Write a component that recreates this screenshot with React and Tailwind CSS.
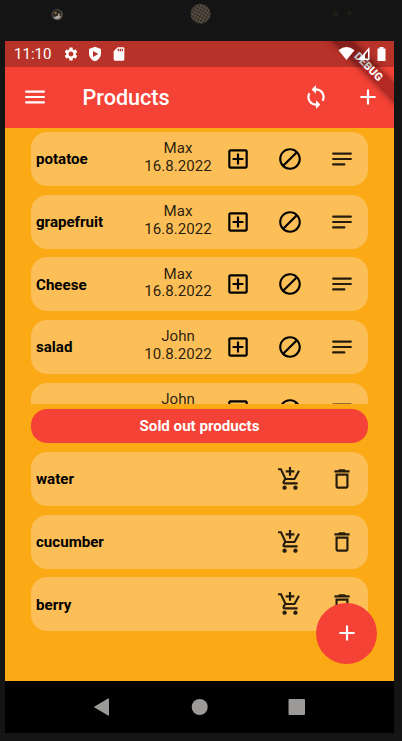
import React from 'react';

const ICONS = {
  addBox:
    'M19 3H5c-1.11 0-2 .9-2 2v14c0 1.1.89 2 2 2h14c1.1 0 2-.9 2-2V5c0-1.1-.9-2-2-2zm0 16H5V5h14v14zm-8-2h2v-4h4v-2h-4V7h-2v4H7v2h4z',
  block:
    'M12 2C6.5 2 2 6.5 2 12s4.5 10 10 10 10-4.5 10-10S17.5 2 12 2zM4 12c0-4.4 3.6-8 8-8 1.8 0 3.5.6 4.9 1.7L5.7 16.9C4.6 15.5 4 13.8 4 12zm8 8c-1.8 0-3.5-.6-4.9-1.7L18.3 7.1C19.4 8.5 20 10.2 20 12c0 4.4-3.6 8-8 8z',
  notes:
    'M20.2 11H3.8a1 1 0 0 0 0 2h16.4a1 1 0 0 0 0-2zM3.8 18h10.4a1 1 0 0 0 0-2H3.8a1 1 0 0 0 0 2zM2.8 7a1 1 0 0 0 1 1h16.4a1 1 0 0 0 0-2H3.8a1 1 0 0 0-1 1z',
  cart:
    'M11 9h2V6h3V4h-3V1h-2v3H8v2h3v3zm-4 9c-1.1 0-1.99.9-1.99 2S5.9 22 7 22s2-.9 2-2-.9-2-2-2zm10 0c-1.1 0-1.99.9-1.99 2s.89 2 1.99 2 2-.9 2-2-.9-2-2-2zM8.1 13h7.45c.75 0 1.41-.41 1.75-1.03L21.16 4.96 19.42 4l-3.87 7H8.53L4.27 2H1v2h2l3.6 7.59-1.35 2.44C4.52 15.37 5.48 17 7 17h12v-2H7l1.1-2z',
  trash:
    'M6 19c0 1.1.9 2 2 2h8c1.1 0 2-.9 2-2V7H6v12zM8 9h8v10H8V9zm7.5-5l-1-1h-5l-1 1H5v2h14V4z',
  sync:
    'M12 4V1L8 5l4 4V6c3.31 0 6 2.69 6 6 0 1.01-.25 1.97-.7 2.8l1.46 1.46C19.54 15.03 20 13.57 20 12c0-4.42-3.58-8-8-8zm0 14c-3.31 0-6-2.69-6-6 0-1.01.25-1.97.7-2.8L5.24 7.74C4.46 8.97 4 10.43 4 12c0 4.42 3.58 8 8 8v3l4-4-4-4v3z',
  plus: 'M19 13h-6v6h-2v-6H5v-2h6V5h2v6h6v2z',
  menu: 'M3 18h18v-2H3v2zm0-5h18v-2H3v2zm0-7v2h18V6H3z',
  gear:
    'M19.14 12.94c.04-.3.06-.61.06-.94 0-.32-.02-.64-.07-.94l2.03-1.58c.18-.14.23-.41.12-.61l-1.92-3.32c-.12-.22-.37-.29-.59-.22l-2.39.96c-.5-.38-1.03-.7-1.62-.94l-.36-2.54c-.04-.24-.24-.41-.48-.41h-3.84c-.24 0-.43.17-.47.41l-.36 2.54c-.59.24-1.13.57-1.62.94l-2.39-.96c-.22-.08-.47 0-.59.22L2.74 8.87c-.12.21-.08.47.12.61l2.03 1.58c-.05.3-.09.63-.09.94s.02.64.07.94l-2.03 1.58c-.18.14-.23.41-.12.61l1.92 3.32c.12.22.37.29.59.22l2.39-.96c.5.38 1.03.7 1.62.94l.36 2.54c.05.24.24.41.48.41h3.84c.24 0 .44-.17.47-.41l.36-2.54c.59-.24 1.13-.56 1.62-.94l2.39.96c.22.08.47 0 .59-.22l1.92-3.32c.12-.22.07-.47-.12-.61l-2.01-1.58zM12 15.6c-1.98 0-3.6-1.62-3.6-3.6s1.62-3.6 3.6-3.6 3.6 1.62 3.6 3.6-1.62 3.6-3.6 3.6z',
  shield:
    'M12 1 3 4.5V11c0 5.55 3.84 10.74 9 12 5.16-1.26 9-6.45 9-12V4.5L12 1zM9 7.5l8 4.5-8 4.5z',
  sdCard:
    'M18 2h-8L4.02 8 4 20c0 1.1.9 2 2 2h12c1.1 0 2-.9 2-2V4c0-1.1-.9-2-2-2zm-6 6h-2V4h2v4zm3 0h-2V4h2v4zm3 0h-2V4h2v4z',
};

function Icon({ name, className = 'size-[26px]' }) {
  return (
    <svg viewBox="0 0 24 24" fill="currentColor" fillRule="evenodd" className={`shrink-0 ${className}`}>
      <path d={ICONS[name]} />
    </svg>
  );
}

const products = [
  { name: 'potatoe', owner: 'Max', date: '16.8.2022' },
  { name: 'grapefruit', owner: 'Max', date: '16.8.2022' },
  { name: 'Cheese', owner: 'Max', date: '16.8.2022' },
  { name: 'salad', owner: 'John', date: '10.8.2022' },
  { name: '', owner: 'John', date: '' },
];

const soldOut = ['water', 'cucumber', 'berry'];

function Card({ name, children }) {
  return (
    <div className="flex h-[54px] shrink-0 items-center rounded-[16px] bg-[#fcbe57] pr-[13px] pl-[5px] text-black">
      <span className="flex-1 pt-px text-[15.1px] font-bold">{name}</span>
      {children}
    </div>
  );
}

function DeviceTop() {
  return (
    <svg className="block h-[41px] w-full shrink-0" viewBox="0 0 402 41">
      <defs>
        <pattern id="mesh" width="3" height="3" patternUnits="userSpaceOnUse" patternTransform="rotate(30)">
          <rect width="3" height="3" fill="#5b5144" />
          <circle cx="1.5" cy="1.5" r="1" fill="#1c1917" />
        </pattern>
      </defs>
      <circle cx="57.3" cy="14.6" r="5.7" fill="#4d4741" />
      <circle cx="57" cy="14" r="4.1" fill="#2b2622" />
      <path d="M53.5 17.5q4 3.5 7.500-.5l-2-2z" fill="#b0a8a0" />
      <circle cx="55.500" cy="13" r="1.2" fill="#8b6a43" />
      <circle cx="59" cy="14.500" r="1" fill="#a89e90" />
      <circle cx="200.5" cy="13.7" r="10" fill="url(#mesh)" />
      <circle cx="335" cy="13" r="4" fill="#1a1815" />
      <circle cx="336" cy="14" r="0.9" fill="#3d3222" />
      <circle cx="349.5" cy="13" r="3" fill="#1a1815" />
      <circle cx="349.5" cy="13.5" r="0.9" fill="#382c1d" />
    </svg>
  );
}

function StatusBar() {
  return (
    <div className="relative z-20 flex h-[26px] shrink-0 items-center bg-black/25 pr-[6px] pl-[9px] text-white">
      <span className="w-[49px] pt-[2px] text-[15.1px] leading-none">11:10</span>
      <Icon name="gear" className="size-[16px]" />
      <Icon name="shield" className="ml-[8px] size-[16px]" />
      <Icon name="sdCard" className="ml-[8px] size-[16px]" />
      <svg viewBox="0 0 50 18" className="ml-auto h-[18px] w-[50px]" fill="#fff">
        <path d="M.5 5.200Q8.500 -1 16.500 5.200L8.500 15z" />
        <path d="M31.500 2v13H20z" />
        <path d="M30 6v7.500h-3V9.500z" fill="#8a211c" />
        <path d="M39.500 3.500h2V2h4v1.500h2V15.500q0 .5-.5.5h-7q-.5 0-.5-.5z" />
      </svg>
    </div>
  );
}

export default function App() {
  return (
    <div className="flex h-[741px] w-[402px] flex-col overflow-hidden bg-[#141414] font-[Roboto,sans-serif]">
      <DeviceTop />
      <div className="relative mr-[8px] ml-[5px] flex h-[692px] flex-col overflow-hidden bg-[#fca916]">
        <div className="flex h-[86.5px] shrink-0 flex-col bg-[#f44336] text-white">
          <StatusBar />
          <div className="flex flex-1 items-center pr-[13px] pl-[17px]">
            <Icon name="menu" />
            <h1 className="ml-[34.5px] flex-1 pt-[2px] text-[21.6px] font-medium">Products</h1>
            <Icon name="sync" />
            <Icon name="plus" className="ml-[26px] size-[26px]" />
          </div>
        </div>

        <div className="absolute top-[19.5px] left-[303.5px] z-10 flex h-[13px] w-[120px] rotate-45 items-center justify-center bg-[#a02020]/75 text-[11px] leading-none font-black text-white shadow-[0_0_6px_rgba(0,0,0,0.5)]">
          <span className="-ml-[2px]">DEBUG</span>
        </div>

        <div className="flex h-[276.5px] shrink-0 flex-col gap-[8.7px] overflow-hidden px-[26px] pt-[4.5px]">
          {products.map((p, i) => (
            <Card key={i} name={p.name}>
              <div className="mr-[13px] h-[39.4px] w-[68px] pt-px text-center text-[15.1px] leading-[17.7px] whitespace-nowrap text-black/85">
                <div>{p.owner}</div>
                <div>{p.date}</div>
              </div>
              <div className="flex gap-[26px]">
                <Icon name="addBox" />
                <Icon name="block" />
                <Icon name="notes" className="size-[26px] text-black/85" />
              </div>
            </Card>
          ))}
        </div>

        <div className="mx-[26px] mt-[5px] flex h-[34px] shrink-0 items-center justify-center rounded-[16px] bg-[#f44336] pt-px text-[15.1px] font-bold text-white">
          Sold out products
        </div>

        <div className="mt-[9px] flex flex-1 flex-col gap-[8.7px] px-[26px]">
          {soldOut.map((name) => (
            <Card key={name} name={name}>
              <div className="flex gap-[26px] text-black/85">
                <Icon name="cart" />
                <Icon name="trash" />
              </div>
            </Card>
          ))}
        </div>

        <button className="absolute right-[17px] bottom-[69.5px] flex size-[61px] items-center justify-center rounded-full bg-[#f44336] text-white">
          <Icon name="plus" />
        </button>

        <div className="flex h-[52px] shrink-0 items-center bg-black text-[#9c9a98]">
          <svg viewBox="0 0 389 52" className="h-full w-full" fill="currentColor">
            <path d="M88.7 26 103 17.5q1-.5 1 .5v16q0 1-1 .5z" />
            <circle cx="194.7" cy="26" r="8" />
            <rect x="283.5" y="18" width="16.5" height="16" rx="1" />
          </svg>
        </div>
      </div>
    </div>
  );
}
